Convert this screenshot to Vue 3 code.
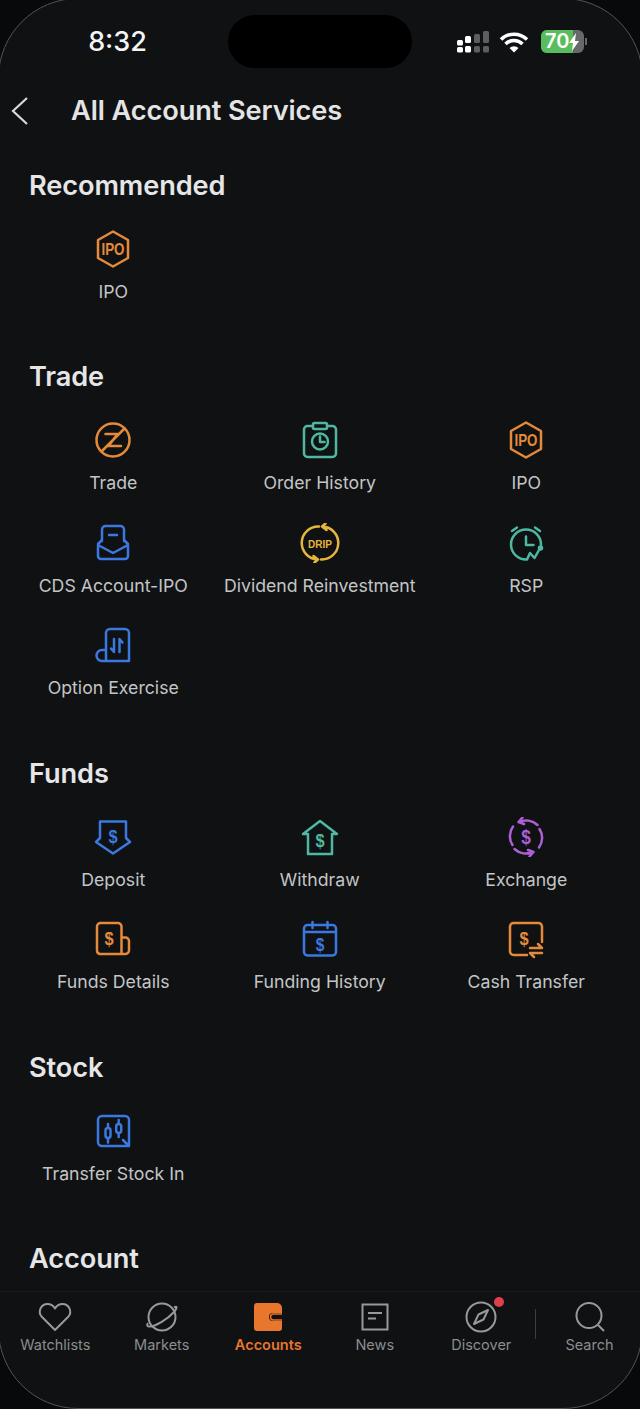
<script setup>
const dollar = (x, y, size = 19) =>
  `<text x="${x}" y="${y}" font-size="${size}" font-weight="700" font-family="Liberation Sans, sans-serif" text-anchor="middle" textLength="${size * 0.48}" lengthAdjust="spacingAndGlyphs" fill="currentColor" stroke="none">$</text>`

const icons = {
  ipo: `<path d="M20 2.500 35 11v18l-15 8.500L5 29V11z"/><text x="20" y="26" font-size="17" font-weight="700" font-family="Liberation Sans, sans-serif" text-anchor="middle" textLength="23" lengthAdjust="spacingAndGlyphs" fill="currentColor" stroke="none">IPO</text>`,
  trade: `<circle cx="20" cy="20" r="16.500"/><path d="M12.500 14H24.500L15.500 26H28M8.500 31.500 31.500 8.500"/>`,
  order: `<path d="M13 6H7.500A3.500 3.500 0 0 0 4 9.500v24A3.500 3.500 0 0 0 7.500 37h25a3.500 3.500 0 0 0 3.500-3.500v-24A3.500 3.500 0 0 0 32.500 6H27"/><rect x="13" y="3" width="14" height="6" rx="1.500"/><circle cx="20" cy="21.500" r="8"/><path d="M20 16.500v5.500h4.500"/>`,
  cds: `<path d="M9 18V6.500A3.500 3.500 0 0 1 12.500 3h15A3.500 3.500 0 0 1 31 6.500V18M16 12h8M9 17l-4 4v12a3 3 0 0 0 3 3h24a3 3 0 0 0 3-3V21l-4-4M5 22l15 8 15-8"/>`,
  drip: `<path d="M19 3.500a16.500 16.500 0 0 0-1.500 33M13.500 33l4.500 3.500-3.500 3M21 36.500a16.500 16.500 0 0 0 1.500-33M26.500 7l-4.500-3.500L25.500.500"/><text x="20" y="24.500" font-size="11.500" font-weight="700" font-family="Liberation Sans, sans-serif" text-anchor="middle" textLength="24" lengthAdjust="spacingAndGlyphs" fill="currentColor" stroke="none">DRIP</text>`,
  rsp: `<path d="M35 22A15 15 0 1 0 21 36.500L24 30l4.500 5L33 27"/><path d="M20 13.500V22h7.500M6 8l5-3.500M34 8l-5-3.500"/><circle cx="34.500" cy="25" r="1.500" fill="currentColor"/>`,
  option: `<path d="M13 25V8a4 4 0 0 1 4-4h15a4 4 0 0 1 4 4v28H9a5.500 5.500 0 0 1 0-11h4v11M21 14v13l-3-3.500M26.500 27V14l3 3.500"/>`,
  deposit: `<path d="M7 4.500h26V21l4 4-17 11.500L3 25l4-4z"/>${dollar(20, 26)}`,
  withdraw: `<path d="M20 4 37 17h-5v20H8V17H3z"/>${dollar(20, 30)}`,
  exchange: `<path d="M31.500 8a16.500 16.500 0 0 0-18.500-3M16.500 .500 12.500 5l5.500 2M8.500 32a16.500 16.500 0 0 0 18.500 3M23.500 39.500l4-4.500-5.500-2M6.500 28A16.500 16.500 0 0 1 7 9.500M33.500 12A16.500 16.500 0 0 1 33 30.500"/>${dollar(20, 26.500, 20)}`,
  details: `<path d="M28.500 35H7a3.500 3.500 0 0 1-3-3.500V7.500A3.500 3.500 0 0 1 7.500 4h17.500A3.500 3.500 0 0 1 28.500 7.500zM28.500 18.500h4A3.500 3.500 0 0 1 36 22v9.500a3.500 3.500 0 0 1-3.500 3.500h-4"/>${dollar(16, 26)}`,
  funding: `<rect x="4" y="6" width="32" height="30.500" rx="3.500"/><path d="M4 13h32M12.500 3v6M27.500 3v6"/>${dollar(20, 31.500, 18)}`,
  cash: `<path d="M36 23V7.500A3.500 3.500 0 0 0 32.500 4h-25A3.500 3.500 0 0 0 4 7.500v25A3.500 3.500 0 0 0 7.500 36H21"/><path d="M24 29h12l-4-4M36 34H24l4 4"/>${dollar(18, 25.500)}`,
  stock: `<path d="M36 35V9a4 4 0 0 0-4-4H9a4 4 0 0 0-4 4v22a4 4 0 0 0 4 4h27l-6-6"/><rect x="12.500" y="17" width="5" height="10" rx="2.500"/><rect x="23.200" y="13" width="5" height="9" rx="2.500"/><path d="M15 13v4M15 27v4.500M25.700 9v4M25.700 22v4"/>`
}

const sections = [
  { title: 'Recommended', items: [{ label: 'IPO', icon: 'ipo', color: 'orange' }] },
  {
    title: 'Trade',
    items: [
      { label: 'Trade', icon: 'trade', color: 'orange' },
      { label: 'Order History', icon: 'order', color: 'teal' },
      { label: 'IPO', icon: 'ipo', color: 'orange' },
      { label: 'CDS Account-IPO', icon: 'cds', color: 'blue' },
      { label: 'Dividend Reinvestment', icon: 'drip', color: 'yellow' },
      { label: 'RSP', icon: 'rsp', color: 'teal' },
      { label: 'Option Exercise', icon: 'option', color: 'blue' }
    ]
  },
  {
    title: 'Funds',
    items: [
      { label: 'Deposit', icon: 'deposit', color: 'blue' },
      { label: 'Withdraw', icon: 'withdraw', color: 'teal' },
      { label: 'Exchange', icon: 'exchange', color: 'purple' },
      { label: 'Funds Details', icon: 'details', color: 'orange' },
      { label: 'Funding History', icon: 'funding', color: 'blue' },
      { label: 'Cash Transfer', icon: 'cash', color: 'orange' }
    ]
  },
  { title: 'Stock', items: [{ label: 'Transfer Stock In', icon: 'stock', color: 'blue' }] },
  { title: 'Account', items: [] }
]
</script>

<template>
  <div class="phone">
    <div class="content">
      <div class="status">
        <div class="time">8:32</div>
        <div class="island"></div>
        <div class="status-right">
          <svg class="signal" width="34" height="24" viewBox="0 0 34 24">
            <rect x="1" y="10" width="6" height="5.500" rx="1.500" fill="#fff" />
            <rect x="1" y="17" width="6" height="5.500" rx="1.500" fill="#fff" />
            <rect x="9" y="6" width="6" height="7" rx="1.500" fill="#fff" />
            <rect x="9" y="16" width="6" height="6.500" rx="1.500" fill="#fff" />
            <rect x="18" y="4" width="6" height="9" rx="1.500" fill="#5c5e60" />
            <rect x="18" y="16" width="6" height="6.500" rx="1.500" fill="#5c5e60" />
            <rect x="27" y="1" width="6" height="12" rx="1.500" fill="#5c5e60" />
            <rect x="27" y="16" width="6" height="6.500" rx="1.500" fill="#5c5e60" />
          </svg>
          <svg class="wifi" width="30" height="22" viewBox="0 0 30 22" fill="none" stroke="#fff" stroke-width="3.500">
            <path d="M2 8.500a18.500 18.500 0 0 1 26 0M6.500 13a12 12 0 0 1 17 0" />
            <path d="M15 21.500 10.500 17a6.500 6.500 0 0 1 9 0z" fill="#fff" stroke="none" />
          </svg>
          <div class="battery">
            <div class="battery-level">70</div>
            <svg class="bolt" width="12" height="18" viewBox="0 0 12 18"><path d="M8 0 1 10h4l-1 8 7-10H7z" fill="#fff" /></svg>
          </div>
          <div class="battery-cap"></div>
        </div>
      </div>

      <div class="nav">
        <svg class="back" width="20" height="30" viewBox="0 0 20 30" fill="none" stroke="#d8d9da" stroke-width="2.200">
          <path d="M17 2 3 15l14 13" />
        </svg>
        <div class="nav-title">All Account Services</div>
      </div>

      <section v-for="section in sections" :key="section.title" class="section">
        <h2 class="section-title">{{ section.title }}</h2>
        <div v-if="section.items.length" class="grid">
          <div v-for="item in section.items" :key="item.label" class="cell">
            <svg
              class="cell-icon"
              :class="item.color"
              width="40"
              height="40"
              viewBox="0 0 40 40"
              fill="none"
              stroke="currentColor"
              stroke-width="2.500"
              stroke-linejoin="round"
              stroke-linecap="round"
              v-html="icons[item.icon]"
            ></svg>
            <div class="cell-label">{{ item.label }}</div>
          </div>
        </div>
      </section>
    </div>

    <nav class="tabbar">
      <div class="tab">
        <svg width="36" height="36" viewBox="0 0 36 36" fill="none" stroke="#97999b" stroke-width="2" stroke-linejoin="round">
          <path d="M18 31 4.500 17.500C.5 12.500 4 5 10.500 5c3.200 0 5.800 1.600 7.500 4.500C19.700 6.600 22.300 5 25.500 5 32 5 35.500 12.500 31.500 17.500z" />
        </svg>
        <span>Watchlists</span>
      </div>
      <div class="tab">
        <svg width="36" height="36" viewBox="0 0 36 36" fill="none" stroke="#97999b" stroke-width="2">
          <circle cx="18" cy="18" r="13.500" />
          <path d="M30 8.500c3.500-2.500 3.500 1-1 5.500-5.500 6-17 13-23 13.500-3 .200-3.500-1.500-2-3.500" />
        </svg>
        <span>Markets</span>
      </div>
      <div class="tab active">
        <svg width="36" height="36" viewBox="0 0 36 36">
          <path d="M4 7a3 3 0 0 1 3-3h20a5 5 0 0 1 5 5v5H23a4 4 0 0 0 0 8h9v7a3 3 0 0 1-3 3H7a3 3 0 0 1-3-3z" fill="#e8762c" />
          <path d="M32 15H23.500a3 3 0 0 0 0 6H32" fill="none" stroke="#e8762c" stroke-width="1.500" />
        </svg>
        <span>Accounts</span>
      </div>
      <div class="tab">
        <svg width="36" height="36" viewBox="0 0 36 36" fill="none" stroke="#97999b" stroke-width="2">
          <rect x="5.500" y="5.500" width="25" height="25" />
          <path d="M11 14h14M11 19.500h8" />
        </svg>
        <span>News</span>
      </div>
      <div class="tab tab-discover">
        <svg width="36" height="36" viewBox="0 0 36 36" fill="none" stroke="#97999b" stroke-width="2" stroke-linejoin="round">
          <circle cx="18" cy="18" r="14.500" />
          <path d="M25 11 20.500 20.500 11 25l4.500-9.500z" />
        </svg>
        <span>Discover</span>
        <i class="dot"></i>
      </div>
      <div class="divider"></div>
      <div class="tab tab-search">
        <svg width="36" height="36" viewBox="0 0 36 36" fill="none" stroke="#97999b" stroke-width="2">
          <circle cx="17" cy="16.500" r="12.500" />
          <path d="m26 26 6 6" />
        </svg>
        <span>Search</span>
      </div>
    </nav>

    <div class="bezel"></div>
  </div>
</template>

<style>
body {
  background: #0f1113;
}
</style>

<style scoped>
.phone {
  position: relative;
  width: 640px;
  height: 1409px;
  overflow: hidden;
  display: flex;
  flex-direction: column;
  background: #0f1113;
  font-family: Inter, "Open Sans", sans-serif;
}

.content {
  height: 1291px;
  overflow: hidden;
  flex: none;
}

.status {
  display: flex;
  height: 53px;
  padding-top: 15px;
}

.time {
  width: 228px;
  padding-left: 7px;
  box-sizing: border-box;
  text-align: center;
  font-size: 27px;
  font-weight: 500;
  line-height: 54px;
  color: #f4f4f4;
}

.island {
  width: 184px;
  height: 53px;
  border-radius: 27px;
  background: #000;
}

.status-right {
  display: flex;
  align-items: center;
  padding-left: 44px;
}

.wifi {
  margin-left: 9px;
}

.battery {
  position: relative;
  width: 43px;
  height: 23px;
  margin-left: 12px;
  border-radius: 6px;
  overflow: hidden;
  background: #66686a;
}

.battery-level {
  width: 28px;
  height: 23px;
  padding-left: 4px;
  background: #58bd5c;
  color: #fff;
  font-size: 20px;
  font-weight: 600;
  line-height: 23px;
}

.bolt {
  position: absolute;
  top: 3px;
  left: 27px;
}

.battery-cap {
  width: 2px;
  height: 7px;
  margin-left: 1px;
  background: #66686a;
}

.nav {
  display: flex;
  align-items: center;
  height: 59px;
  margin-top: 13px;
  padding-left: 10px;
}

.nav-title {
  margin-left: 41px;
  font-size: 27.200px;
  font-weight: 600;
  letter-spacing: -0.1px;
  color: #e4e4e5;
}

.section {
  margin-top: 56.500px;
}

.nav + .section {
  margin-top: 28.500px;
}

.section-title {
  margin: 0;
  padding-left: 29px;
  font-size: 27.200px;
  font-weight: 600;
  letter-spacing: -0.1px;
  line-height: 34px;
  color: #e6e6e7;
}

.grid {
  display: grid;
  grid-template-columns: repeat(3, 206.500px);
  row-gap: 27.500px;
  margin-top: 26px;
  padding-left: 10px;
}

.cell {
  display: flex;
  flex-direction: column;
  align-items: center;
  gap: 11px;
}

.cell-label {
  font-size: 17.700px;
  line-height: 24px;
  color: #c4c5c6;
  white-space: nowrap;
}

.orange {
  color: #e58a3a;
}

.teal {
  color: #4eb8a2;
}

.blue {
  color: #3b78e0;
}

.yellow {
  color: #e6b63c;
}

.purple {
  color: #ad5fd6;
}

.tabbar {
  display: flex;
  flex: 1;
  padding: 7px 0 0 2px;
  border-top: 1px solid #17191b;
  box-sizing: border-box;
}

.tab {
  position: relative;
  display: flex;
  flex: none;
  flex-direction: column;
  align-items: center;
  width: 106.500px;
  height: 56px;
}

.tab span {
  font-size: 14.500px;
  line-height: 20px;
  color: #8b8d8f;
}

.tab.active span {
  color: #e8762c;
  font-weight: 600;
}

.dot {
  position: absolute;
  top: -2px;
  left: 66px;
  width: 10px;
  height: 10px;
  border-radius: 50%;
  background: #e0404c;
}

.divider {
  flex: none;
  width: 1px;
  height: 30px;
  margin-top: 10px;
  background: #3c3e40;
}

.tab-search {
  width: 100px;
  margin-left: 4px;
}

.bezel {
  position: absolute;
  inset: -2.500px -2.500px 0 -2.500px;
  border: 1.500px solid #505254;
  border-radius: 80px;
  box-shadow: 0 0 0 60px #08090a;
  pointer-events: none;
}
</style>
